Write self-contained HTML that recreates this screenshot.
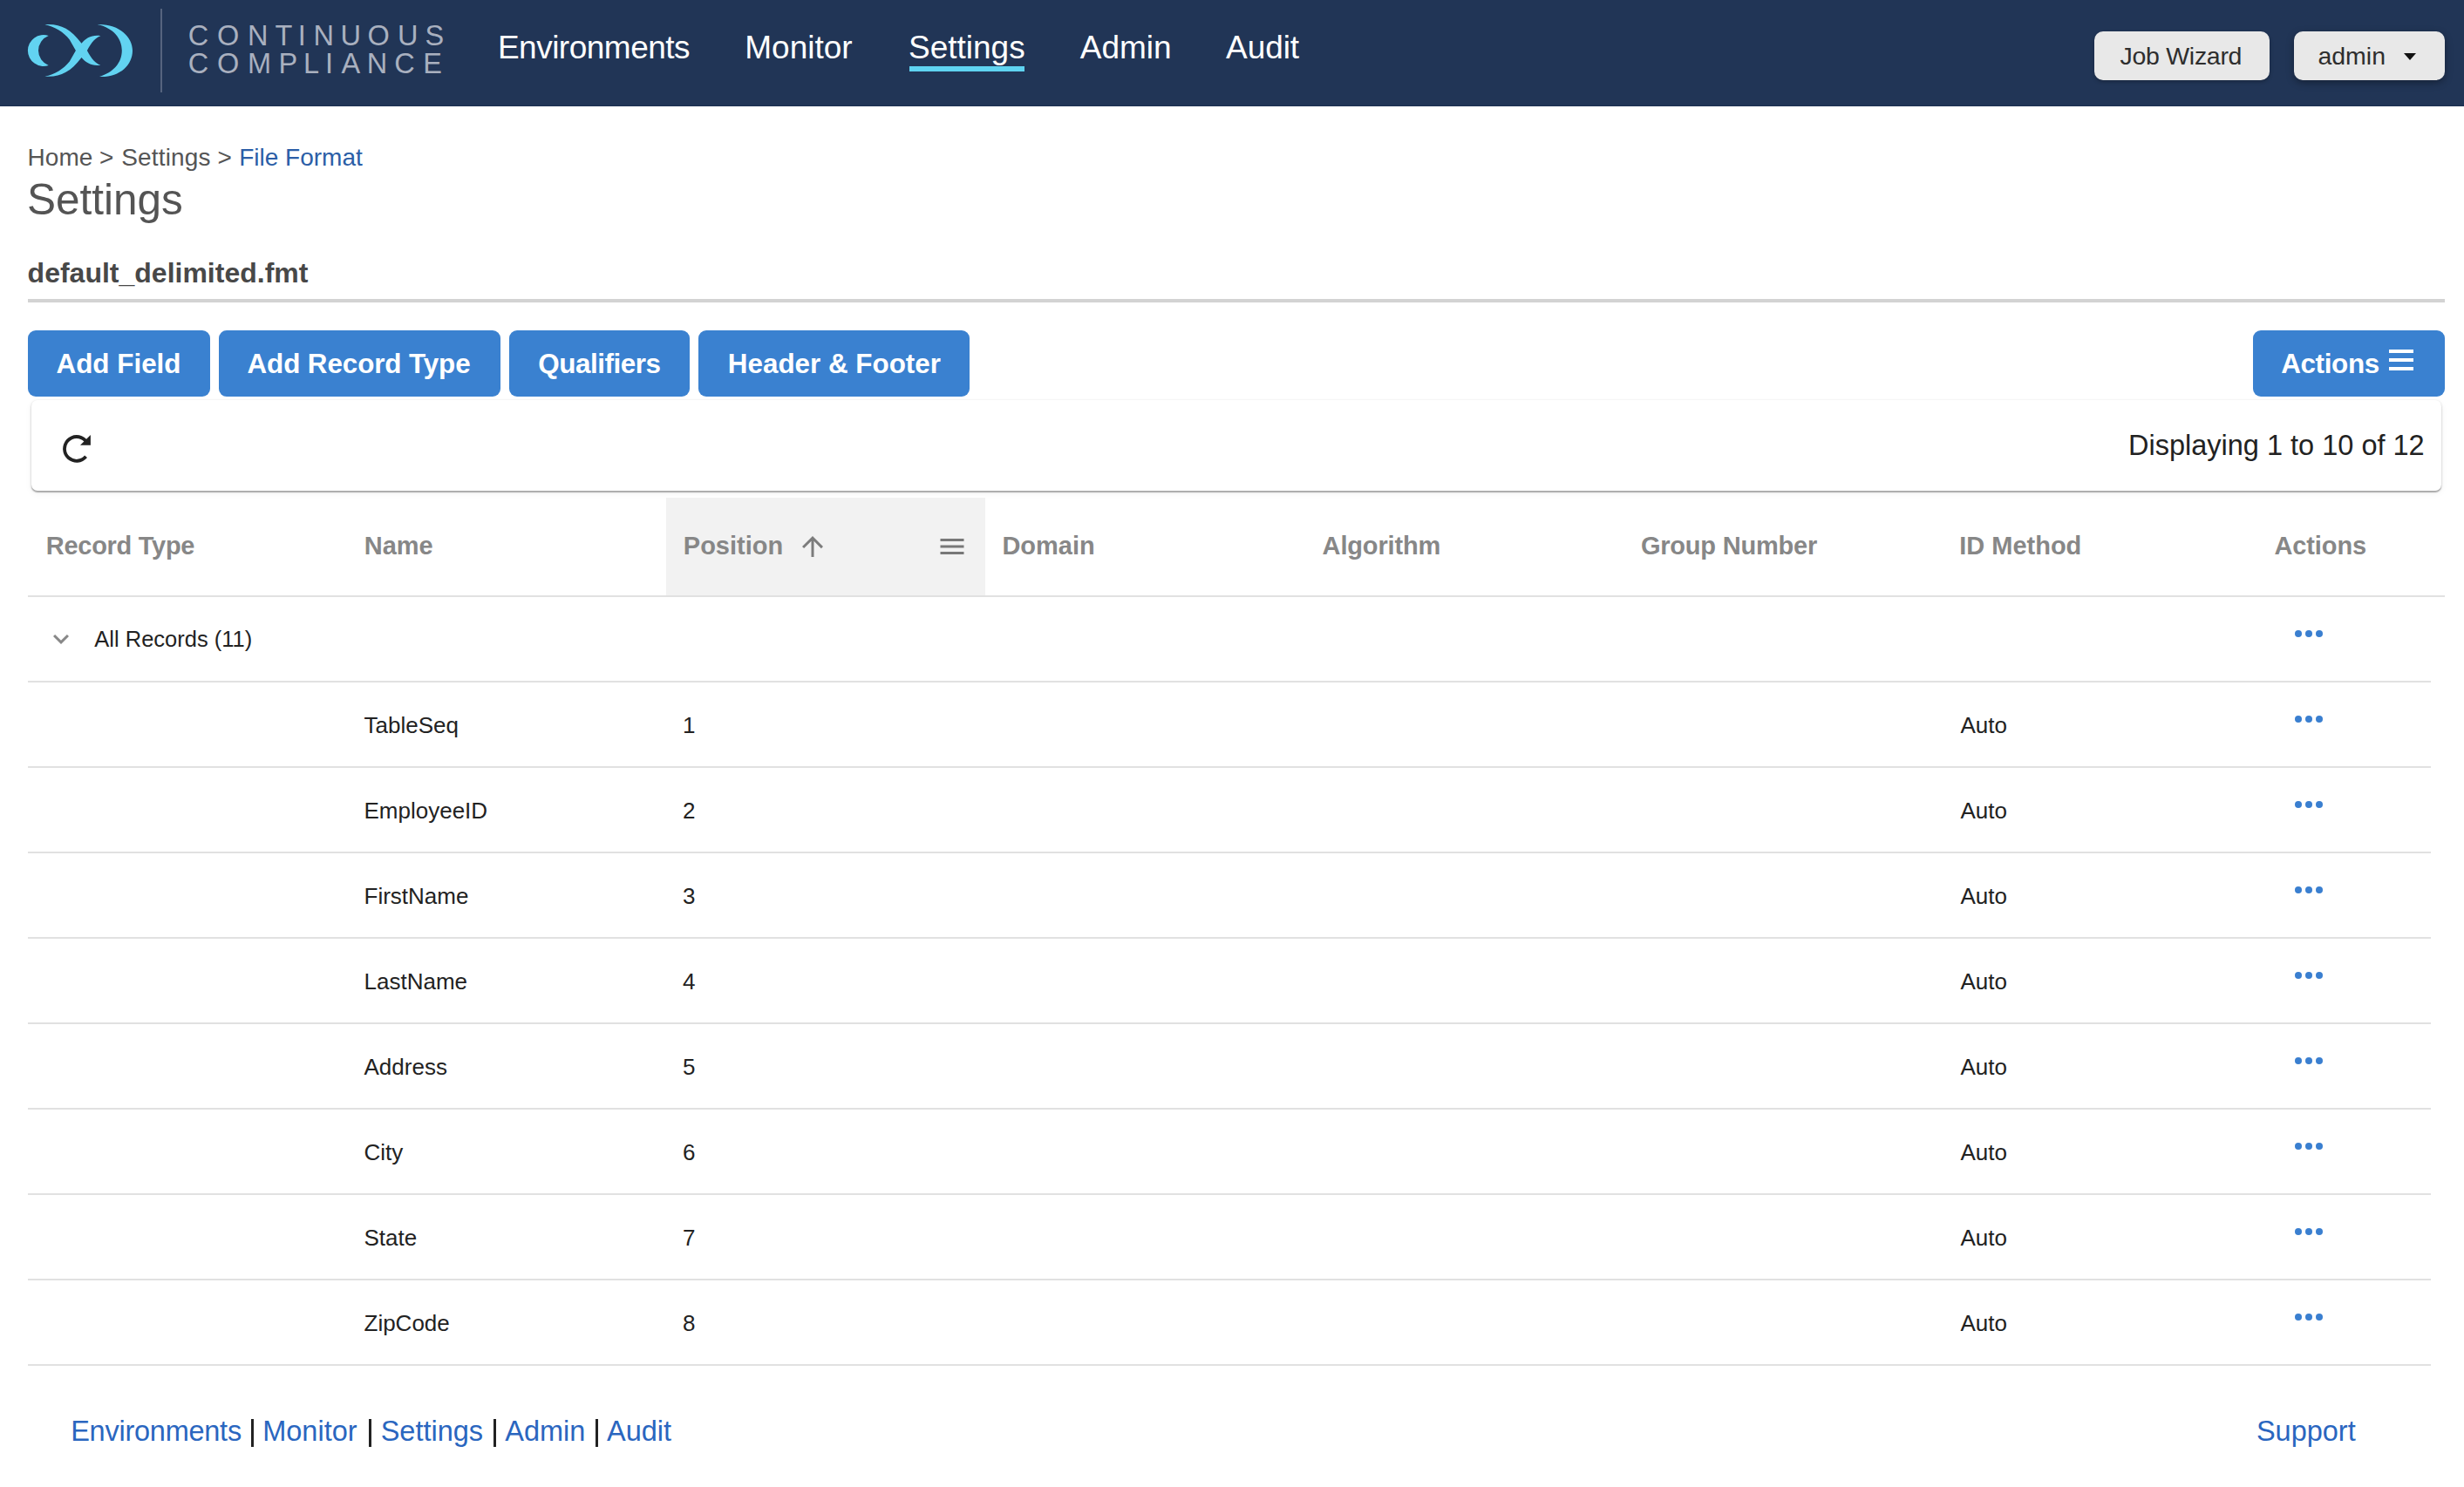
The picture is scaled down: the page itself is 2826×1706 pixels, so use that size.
<!DOCTYPE html>
<html><head><meta charset="utf-8"><title>Settings</title>
<style>
html,body{margin:0;padding:0;}
body{width:2826px;height:1706px;position:relative;overflow:hidden;background:#fff;font-family:"Liberation Sans",sans-serif;}
.t{position:absolute;line-height:1;white-space:nowrap;}
.abs{position:absolute;}
.btn{position:absolute;background:#3a81d0;border-radius:9px;top:379px;height:76px;}
.dots{position:absolute;width:32px;height:8px;}
.dots i{position:absolute;top:0;width:8px;height:8px;border-radius:50%;background:#3a7fd0;}
.rb{position:absolute;left:32px;width:2756px;height:2px;background:#e1e1e1;}
</style></head><body>
<div class="abs" style="left:0;top:0;width:2826px;height:122px;background:#213556;"></div>
<div class="abs" style="left:0;top:121px;width:2826px;height:1px;background:#1a2f50;"></div>
<svg class="abs" style="left:0;top:0" width="160" height="122" viewBox="0 0 160 122">
<g fill="#62d3f1">
<path d="M55.7,41 A17.97,17.97 0 1 0 55.7,75 A18.2,18.2 0 0 1 55.7,41 Z"/>
<path d="M111.5,28 C136,27 152,42 152,58 C152,75 137,89 114,88 C130,83 139.8,72 139.8,58 C139.8,44 130,32 111.5,28 Z"/>
<path d="M51.4,28.3 C68,27 80,32 93.5,49.8 C98,44 106,39.5 115.4,41.2 C110,43 105,48 99.9,57.9 C105,67.8 110,72.8 115.4,74.7 C106,76.4 98,71.9 93.5,66.1 C80,83.9 68,88.9 51.4,87.6 C63,85.4 73,78.9 79.8,70.4 L86.9,57.9 L79.8,45.5 C73,37 63,30.5 51.4,28.3 Z"/>
</g></svg>
<div class="abs" style="left:184px;top:10px;width:2px;height:96px;background:#56647e;"></div>
<svg class="abs" style="left:0;top:0" width="560" height="122">
<text x="215.8 249.1 284.1 315.5 341.8 359.4 390.6 421.6 455.9 487.5" y="51.8" font-family="Liberation Sans" font-size="32.5" fill="#a9b0bf">CONTINUOUS</text>
<text x="215.8 249.1 284.1 319.4 347.9 373.0 391.5 420.7 452.2 485.3" y="83.9" font-family="Liberation Sans" font-size="32.5" fill="#a9b0bf">COMPLIANCE</text>
</svg>
<div class="t" style="left:570.9px;top:36.2px;font-size:37px;color:#fff;letter-spacing:-0.5px;">Environments</div>
<div class="t" style="left:854.3px;top:36.2px;font-size:37px;color:#fff;letter-spacing:0px;">Monitor</div>
<div class="t" style="left:1042.0px;top:36.2px;font-size:37px;color:#fff;letter-spacing:0px;">Settings</div>
<div class="t" style="left:1238.8px;top:36.2px;font-size:37px;color:#fff;letter-spacing:0px;">Admin</div>
<div class="t" style="left:1406.1px;top:36.2px;font-size:37px;color:#fff;letter-spacing:-0.1px;">Audit</div>
<div class="abs" style="left:1043px;top:76px;width:132px;height:6px;background:#5fd3f1;"></div>
<div class="abs" style="left:2402px;top:36px;width:201px;height:56px;border-radius:10px;background:#e8e8e8;box-shadow:0 2px 4px rgba(0,0,0,.25);"></div>
<div class="t" style="left:2431.6px;top:49.9px;font-size:28.5px;color:#2e2e2e;letter-spacing:-0.3px;">Job Wizard</div>
<div class="abs" style="left:2631px;top:36px;width:173px;height:56px;border-radius:10px;background:#e8e8e8;box-shadow:0 3px 8px rgba(0,0,0,.35);"></div>
<div class="t" style="left:2658.4px;top:49.5px;font-size:28.5px;color:#2e2e2e;">admin</div>
<div class="abs" style="left:2757px;top:61px;width:0;height:0;border-left:7px solid transparent;border-right:7px solid transparent;border-top:8.5px solid #111;"></div>
<div class="t" style="left:31.6px;top:166.6px;font-size:28px;color:#555;">Home &gt; <span style="margin-left:1px;letter-spacing:0.17px">Settings</span> &gt; <span style="color:#2b5ea7;margin-left:0.5px">File Format</span></div>
<div class="t" style="left:31.0px;top:204.3px;font-size:49.5px;color:#545454;">Settings</div>
<div class="t" style="left:31.6px;top:297.1px;font-size:32px;color:#484848;font-weight:700;">default_delimited.fmt</div>
<div class="abs" style="left:32px;top:343px;width:2772px;height:4px;background:#d3d3d3;"></div>
<div class="btn" style="left:32px;width:209px;"></div>
<div class="t" style="left:64.5px;top:402.3px;font-size:31.4px;color:#fff;font-weight:700;letter-spacing:0px;">Add Field</div>
<div class="btn" style="left:251px;width:323px;"></div>
<div class="t" style="left:283.5px;top:402.3px;font-size:31.4px;color:#fff;font-weight:700;letter-spacing:-0.1px;">Add Record Type</div>
<div class="btn" style="left:584px;width:207px;"></div>
<div class="t" style="left:617.2px;top:402.3px;font-size:31.4px;color:#fff;font-weight:700;letter-spacing:-0.45px;">Qualifiers</div>
<div class="btn" style="left:801px;width:311px;"></div>
<div class="t" style="left:834.8px;top:402.3px;font-size:31.4px;color:#fff;font-weight:700;letter-spacing:0px;">Header &amp; Footer</div>
<div class="btn" style="left:2584px;width:220px;"></div>
<div class="t" style="left:2616.2px;top:402.3px;font-size:31.4px;color:#fff;font-weight:700;letter-spacing:-0.35px;">Actions</div>
<div class="abs" style="left:2740px;top:401px;width:28px;height:4px;background:#fff;"></div>
<div class="abs" style="left:2740px;top:411px;width:28px;height:4px;background:#fff;"></div>
<div class="abs" style="left:2740px;top:421px;width:28px;height:4px;background:#fff;"></div>
<div class="abs" style="left:36px;top:459px;width:2764px;height:104px;border-radius:7px;background:#fff;box-shadow:0 2px 1px rgba(0,0,0,.22),0 1px 3px rgba(0,0,0,.2),0 3px 8px rgba(0,0,0,.05);"></div>
<svg class="abs" style="left:64px;top:491px" width="48" height="48" viewBox="64 491 48 48"><path fill="#222" d="M100.0,525.06 A15.8,15.8 0 1 1 99.07,503.73 L96.385,506.415 A12,12 0 1 0 97.09,522.61 Z M103.9,498.9 L103.9,510.75 L92,510.75 Z"/></svg>
<div class="t" style="left:2441.0px;top:495.0px;font-size:32.5px;color:#222;">Displaying 1 to 10 of 12</div>
<div class="abs" style="left:764px;top:571px;width:366px;height:112px;background:#f2f2f2;"></div>
<div class="t" style="left:52.8px;top:612.4px;font-size:29px;color:#878787;font-weight:700;letter-spacing:-0.28px;">Record Type</div>
<div class="t" style="left:417.7px;top:612.4px;font-size:29px;color:#878787;font-weight:700;letter-spacing:0px;">Name</div>
<div class="t" style="left:783.8px;top:612.4px;font-size:29px;color:#878787;font-weight:700;letter-spacing:0px;">Position</div>
<div class="t" style="left:1149.4px;top:612.4px;font-size:29px;color:#878787;font-weight:700;letter-spacing:0px;">Domain</div>
<div class="t" style="left:1516.6px;top:612.4px;font-size:29px;color:#878787;font-weight:700;letter-spacing:-0.15px;">Algorithm</div>
<div class="t" style="left:1881.9px;top:612.4px;font-size:29px;color:#878787;font-weight:700;letter-spacing:-0.2px;">Group Number</div>
<div class="t" style="left:2247.2px;top:612.4px;font-size:29px;color:#878787;font-weight:700;letter-spacing:0px;">ID Method</div>
<div class="t" style="left:2608.4px;top:612.4px;font-size:29px;color:#878787;font-weight:700;letter-spacing:-0.1px;">Actions</div>
<svg class="abs" style="left:913.5px;top:609px" width="36" height="36" viewBox="0 0 24 24"><path fill="#7c7c7c" d="M4 12l1.41 1.41L11 7.83V20h2V7.83l5.58 5.59L20 12l-8-8-8 8z"/></svg>
<svg class="abs" style="left:1073.5px;top:608.6px" width="36" height="36" viewBox="0 0 24 24"><path fill="#787878" d="M3 18h18v-2H3v2zm0-5h18v-2H3v2zm0-7v2h18V6H3z"/></svg>
<div class="abs" style="left:32px;top:683px;width:2772px;height:2px;background:#e1e1e1;"></div>
<svg class="abs" style="left:52px;top:715px" width="36" height="36" viewBox="0 0 24 24"><path fill="#888" d="M16.59 8.59L12 13.17 7.41 8.59 6 10l6 6 6-6z"/></svg>
<div class="t" style="left:108.3px;top:721.4px;font-size:25.5px;color:#222;">All Records (11)</div>
<div class="dots" style="left:2632px;top:723px;"><i style="left:0"></i><i style="left:12px"></i><i style="left:24px"></i></div>
<div class="rb" style="top:781px;"></div>
<div class="t" style="left:417.5px;top:819.2px;font-size:26px;color:#222;">TableSeq</div>
<div class="t" style="left:783.0px;top:819.2px;font-size:26px;color:#222;">1</div>
<div class="t" style="left:2248.5px;top:819.2px;font-size:26px;color:#222;">Auto</div>
<div class="dots" style="left:2632px;top:821px;"><i style="left:0"></i><i style="left:12px"></i><i style="left:24px"></i></div>
<div class="rb" style="top:879px;"></div>
<div class="t" style="left:417.5px;top:917.2px;font-size:26px;color:#222;">EmployeeID</div>
<div class="t" style="left:783.0px;top:917.2px;font-size:26px;color:#222;">2</div>
<div class="t" style="left:2248.5px;top:917.2px;font-size:26px;color:#222;">Auto</div>
<div class="dots" style="left:2632px;top:919px;"><i style="left:0"></i><i style="left:12px"></i><i style="left:24px"></i></div>
<div class="rb" style="top:977px;"></div>
<div class="t" style="left:417.5px;top:1015.2px;font-size:26px;color:#222;">FirstName</div>
<div class="t" style="left:783.0px;top:1015.2px;font-size:26px;color:#222;">3</div>
<div class="t" style="left:2248.5px;top:1015.2px;font-size:26px;color:#222;">Auto</div>
<div class="dots" style="left:2632px;top:1017px;"><i style="left:0"></i><i style="left:12px"></i><i style="left:24px"></i></div>
<div class="rb" style="top:1075px;"></div>
<div class="t" style="left:417.5px;top:1113.2px;font-size:26px;color:#222;">LastName</div>
<div class="t" style="left:783.0px;top:1113.2px;font-size:26px;color:#222;">4</div>
<div class="t" style="left:2248.5px;top:1113.2px;font-size:26px;color:#222;">Auto</div>
<div class="dots" style="left:2632px;top:1115px;"><i style="left:0"></i><i style="left:12px"></i><i style="left:24px"></i></div>
<div class="rb" style="top:1173px;"></div>
<div class="t" style="left:417.5px;top:1211.2px;font-size:26px;color:#222;">Address</div>
<div class="t" style="left:783.0px;top:1211.2px;font-size:26px;color:#222;">5</div>
<div class="t" style="left:2248.5px;top:1211.2px;font-size:26px;color:#222;">Auto</div>
<div class="dots" style="left:2632px;top:1213px;"><i style="left:0"></i><i style="left:12px"></i><i style="left:24px"></i></div>
<div class="rb" style="top:1271px;"></div>
<div class="t" style="left:417.5px;top:1309.2px;font-size:26px;color:#222;">City</div>
<div class="t" style="left:783.0px;top:1309.2px;font-size:26px;color:#222;">6</div>
<div class="t" style="left:2248.5px;top:1309.2px;font-size:26px;color:#222;">Auto</div>
<div class="dots" style="left:2632px;top:1311px;"><i style="left:0"></i><i style="left:12px"></i><i style="left:24px"></i></div>
<div class="rb" style="top:1369px;"></div>
<div class="t" style="left:417.5px;top:1407.2px;font-size:26px;color:#222;">State</div>
<div class="t" style="left:783.0px;top:1407.2px;font-size:26px;color:#222;">7</div>
<div class="t" style="left:2248.5px;top:1407.2px;font-size:26px;color:#222;">Auto</div>
<div class="dots" style="left:2632px;top:1409px;"><i style="left:0"></i><i style="left:12px"></i><i style="left:24px"></i></div>
<div class="rb" style="top:1467px;"></div>
<div class="t" style="left:417.5px;top:1505.2px;font-size:26px;color:#222;">ZipCode</div>
<div class="t" style="left:783.0px;top:1505.2px;font-size:26px;color:#222;">8</div>
<div class="t" style="left:2248.5px;top:1505.2px;font-size:26px;color:#222;">Auto</div>
<div class="dots" style="left:2632px;top:1507px;"><i style="left:0"></i><i style="left:12px"></i><i style="left:24px"></i></div>
<div class="rb" style="top:1565px;"></div>
<div class="t" style="left:81.2px;top:1625.5px;font-size:32.5px;color:#2a66bf;letter-spacing:-0.25px;">Environments</div>
<div class="t" style="left:301.2px;top:1625.5px;font-size:32.5px;color:#2a66bf;">Monitor</div>
<div class="t" style="left:436.7px;top:1625.5px;font-size:32.5px;color:#2a66bf;">Settings</div>
<div class="t" style="left:579.3px;top:1625.5px;font-size:32.5px;color:#2a66bf;">Admin</div>
<div class="t" style="left:696.0px;top:1625.5px;font-size:32.5px;color:#2a66bf;">Audit</div>
<div class="t" style="left:2587.9px;top:1625.5px;font-size:32.5px;color:#2a66bf;">Support</div>
<div class="abs" style="left:288.2px;top:1627.5px;width:3px;height:32.5px;background:#222;"></div>
<div class="abs" style="left:423.4px;top:1627.5px;width:3px;height:32.5px;background:#222;"></div>
<div class="abs" style="left:565.7px;top:1627.5px;width:3px;height:32.5px;background:#222;"></div>
<div class="abs" style="left:682.5px;top:1627.5px;width:3px;height:32.5px;background:#222;"></div>
</body></html>
